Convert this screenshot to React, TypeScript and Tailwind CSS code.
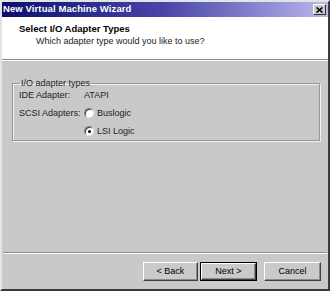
import React from "react"

function Radio({ checked }: { checked?: boolean }) {
  return (
    <span className="relative inline-block w-[10px] h-[10px] rounded-full bg-white border border-t-[#808080] border-l-[#808080] border-r-[#e8e8e8] border-b-[#e8e8e8] shadow-[inset_1px_1px_0_#404040]">
      {checked && <span className="absolute left-[3px] top-[3px] w-[3px] h-[3px] rounded-full bg-black" />}
    </span>
  )
}

function Button({ label, isDefault }: { label: string; isDefault?: boolean }) {
  return (
    <div className={`h-[19px] flex ${isDefault ? "border border-black" : ""}`}>
      <div className="flex-1 flex items-center justify-center bg-[#cacaca] border border-t-white border-l-white border-r-[#404040] border-b-[#404040] shadow-[inset_-1px_-1px_0_#8a8a8a] text-[9px] text-black">
        {label}
      </div>
    </div>
  )
}

export default function App() {
  return (
    <div
      className="w-[330px] h-[291px] bg-[#c9c9c9] border-2 border-t-[#e4e4e4] border-l-[#e4e4e4] border-r-[#3a3a3a] border-b-[#3a3a3a] flex flex-col"
      style={{ fontFamily: '"Liberation Sans", Arial, sans-serif' }}
    >
      {/* title bar */}
      <div className="h-[15px] flex items-center justify-between pl-[1px] pr-[2px] bg-gradient-to-r from-[#0c0c6c] via-[#4a46a8] to-[#bcb6ea]">
        <span className="text-white font-bold text-[9.5px] tracking-[0.1px]">New Virtual Machine Wizard</span>
        <div className="w-[13px] h-[11px] flex items-center justify-center bg-[#cacaca] border border-t-white border-l-white border-r-[#303030] border-b-[#303030]">
          <svg width="7" height="6" viewBox="0 0 7 6">
            <path d="M0.5 0.5 L6.5 5.5 M6.5 0.5 L0.5 5.5" stroke="#000" strokeWidth="1.6" />
          </svg>
        </div>
      </div>

      {/* header */}
      <div className="h-[42px] bg-white flex flex-col pt-[6px] pl-[17px]">
        <span className="font-bold text-[9.5px] text-black leading-[12px]">Select I/O Adapter Types</span>
        <span className="pl-[17px] text-[9px] text-[#222] leading-[12px]">Which adapter type would you like to use?</span>
      </div>
      <div className="h-[2px] border-t border-[#8c8c8c] border-b border-b-white" />

      {/* body */}
      <div className="flex-1 pl-[10px] pr-[8px] pt-[17px]">
        <fieldset className="h-[63px] border border-[#989898] shadow-[1px_1px_0_#f0f0f0,inset_1px_1px_0_#f0f0f0] px-[6px] pt-[1px]">
          <legend className="px-[1px] ml-[1px] text-[9px] text-[#222] leading-[10px]">I/O adapter types</legend>
          <div className="grid grid-cols-[65px_1fr] text-[9px] text-[#222] leading-[12px] gap-y-[6px]">
            <span>IDE Adapter:</span>
            <span>ATAPI</span>
            <span>SCSI Adapters:</span>
            <div className="flex flex-col gap-[6px]">
              <label className="flex items-center gap-[3px]">
                <Radio />
                <span>Buslogic</span>
              </label>
              <label className="flex items-center gap-[3px]">
                <Radio checked />
                <span>LSI Logic</span>
              </label>
            </div>
          </div>
        </fieldset>
      </div>

      {/* footer */}
      <div className="h-[2px] border-t border-[#8c8c8c] border-b border-b-white mx-[1px]" />
      <div className="h-[35px] flex items-start justify-end gap-[2px] pt-[8px] pr-[7px]">
        <div className="w-[55px]"><Button label="< Back" /></div>
        <div className="w-[57px]"><Button label="Next >" isDefault /></div>
        <div className="w-[57px] ml-[5px]"><Button label="Cancel" /></div>
      </div>
    </div>
  )
}
